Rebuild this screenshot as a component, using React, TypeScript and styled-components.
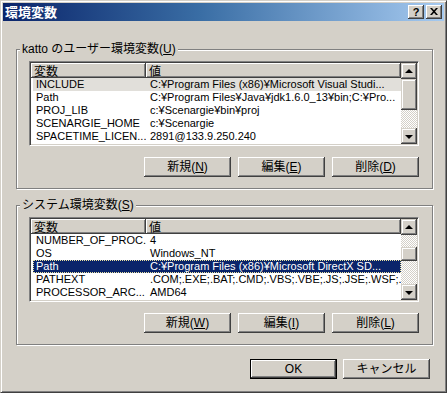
import { FC } from "react";
import styled, { createGlobalStyle } from "styled-components";

const GlobalStyle = createGlobalStyle`
  html, body {
    margin: 0;
    padding: 0;
    background: #d4d0c8;
  }
  * {
    box-sizing: border-box;
  }
`;

const face = "#d4d0c8";
const uiFont = `"Liberation Sans", "Noto Sans CJK JP", sans-serif`;

const Window = styled.div`
  width: 447px;
  height: 393px;
  display: flex;
  flex-direction: column;
  background: ${face};
  border-top: 1px solid ${face};
  border-left: 1px solid ${face};
  border-right: 1px solid #404040;
  border-bottom: 1px solid #404040;
  box-shadow: inset 1px 1px 0 #fff, inset -1px -1px 0 #808080;
  padding: 2px;
  font-family: ${uiFont};
  font-size: 12px;
  color: #000;
`;

const TitleBar = styled.div`
  height: 18px;
  display: flex;
  align-items: center;
  padding: 0 2px 0 2px;
  background: linear-gradient(to right, #0a246a 0%, #3a6ea5 45%, #a6caf0 100%);
`;

const Title = styled.div`
  flex: 1;
  color: #fff;
  font-family: "Noto Sans CJK JP", sans-serif;
  font-weight: bold;
  font-size: 13px;
  line-height: 18px;
`;

const CaptionButton = styled.div<{ $gap?: number }>`
  width: 16px;
  height: 14px;
  margin-left: ${({ $gap }) => $gap ?? 0}px;
  background: ${face};
  box-shadow: inset -1px -1px 0 #404040, inset 1px 1px 0 #fff,
    inset -2px -2px 0 #808080, inset 2px 2px 0 ${face};
  display: flex;
  align-items: center;
  justify-content: center;
  font-family: "Liberation Sans", sans-serif;
  font-weight: bold;
  font-size: 11px;
  line-height: 14px;
  padding-bottom: 1px;
`;

const Body = styled.div`
  flex: 1;
  display: flex;
  flex-direction: column;
  padding: 21px 11px 0 13px;
`;

const Group = styled.fieldset<{ $top?: number }>`
  margin: ${({ $top }) => $top ?? 0}px 0 0 0;
  padding: 0;
  min-width: 0;
  border: 1px solid #808080;
  box-shadow: 1px 1px 0 #fff, inset 1px 1px 0 #fff;
`;

const Legend = styled.legend`
  margin-left: 3px;
  padding: 0 2px;
  height: 14px;
  line-height: 14px;
  font-size: 12px;
  background: ${face};
  white-space: nowrap;
`;

const GroupContent = styled.div`
  display: flex;
  flex-direction: column;
  padding: 5px 13px 11px 12px;
`;

const List = styled.div`
  height: 85px;
  display: flex;
  background: #fff;
  border-top: 1px solid #808080;
  border-left: 1px solid #808080;
  border-right: 1px solid #fff;
  border-bottom: 1px solid #fff;
  box-shadow: inset 1px 1px 0 #404040, inset -1px -1px 0 ${face};
  padding: 1px;
`;

const ListBody = styled.div`
  flex: 1;
  min-width: 0;
  overflow: hidden;
  display: flex;
  flex-direction: column;
`;

const HeaderRow = styled.div`
  display: flex;
  height: 15px;
  flex-shrink: 0;
`;

const HeaderCell = styled.div<{ $width?: number }>`
  ${({ $width }) => ($width ? `width: ${$width}px;` : "flex: 1;")}
  height: 15px;
  background: ${face};
  box-shadow: inset -1px -1px 0 #404040, inset 1px 1px 0 #fff,
    inset -2px -2px 0 #808080;
  font-family: "Noto Sans CJK JP", sans-serif;
  font-size: 12px;
  line-height: 15px;
  padding-left: 3px;
  white-space: nowrap;
`;

const Row = styled.div<{ $state?: "selected" | "inactive" }>`
  display: flex;
  height: 13px;
  flex-shrink: 0;
  margin-left: 2px;
  font-size: 11px;
  line-height: 13px;
  white-space: nowrap;
  background: ${({ $state }) =>
    $state === "selected" ? "#0a246a" : $state === "inactive" ? "#e1dfda" : "transparent"};
  color: ${({ $state }) => ($state === "selected" ? "#fff" : "#000")};
  outline: ${({ $state }) => ($state === "selected" ? "1px dotted #e8e0a0" : "none")};
  outline-offset: -1px;
`;

const Cell = styled.div<{ $width?: number }>`
  ${({ $width }) => ($width ? `width: ${$width}px;` : "flex: 1;")}
  overflow: hidden;
  padding-left: ${({ $width }) => ($width ? 3 : 4)}px;
`;

const ScrollBar = styled.div`
  width: 16px;
  display: flex;
  flex-direction: column;
  flex-shrink: 0;
  background: repeating-conic-gradient(#fff 0 25%, ${face} 0 50%) 0 0 / 2px 2px;
`;

const ScrollPart = styled.div<{ $h: number; $mt?: number }>`
  height: ${({ $h }) => $h}px;
  margin-top: ${({ $mt }) => $mt ?? 0}px;
  flex-shrink: 0;
  background: ${face};
  box-shadow: inset -1px -1px 0 #404040, inset 1px 1px 0 ${face},
    inset -2px -2px 0 #808080, inset 2px 2px 0 #fff;
  display: flex;
  align-items: center;
  justify-content: center;
`;

const ScrollTrack = styled.div`
  flex: 1;
`;

const Arrow = styled.div<{ $down?: boolean }>`
  width: 0;
  height: 0;
  border-left: 4px solid transparent;
  border-right: 4px solid transparent;
  ${({ $down }) =>
    $down ? "border-top: 4px solid #000; margin-top: 1px;" : "border-bottom: 4px solid #000; margin-top: -1px;"}
`;

const ButtonRow = styled.div<{ $gap: number }>`
  display: flex;
  justify-content: flex-end;
  gap: ${({ $gap }) => $gap}px;
  margin-top: 11px;
`;

const Button = styled.div<{ $default?: boolean }>`
  width: 87px;
  height: 20px;
  background: ${face};
  display: flex;
  align-items: center;
  justify-content: center;
  font-size: 12px;
  line-height: 14px;
  white-space: nowrap;
  ${({ $default }) => ($default ? "border: 1px solid #000;" : "")}
  box-shadow: inset -1px -1px 0 #404040, inset 1px 1px 0 #fff,
    inset -2px -2px 0 #808080, inset 2px 2px 0 ${face};
  u {
    text-underline-offset: 1px;
  }
`;

const Footer = styled.div`
  display: flex;
  justify-content: flex-end;
  gap: 6px;
  margin-top: 14px;
  padding-right: 3px;
`;

type EnvVar = { name: string; value: string; state?: "selected" | "inactive" };

const userVars: EnvVar[] = [
  { name: "INCLUDE", value: "C:¥Program Files (x86)¥Microsoft Visual Studi...", state: "inactive" },
  { name: "Path", value: "C:¥Program Files¥Java¥jdk1.6.0_13¥bin;C:¥Pro..." },
  { name: "PROJ_LIB", value: "c:¥Scenargie¥bin¥proj" },
  { name: "SCENARGIE_HOME", value: "c:¥Scenargie" },
  { name: "SPACETIME_LICEN...", value: "2891@133.9.250.240" },
  { name: "TEMP", value: "%USERPROFILE%¥Local Settings¥Temp" },
];

const systemVars: EnvVar[] = [
  { name: "NUMBER_OF_PROC...", value: "4" },
  { name: "OS", value: "Windows_NT" },
  { name: "Path", value: "C:¥Program Files (x86)¥Microsoft DirectX SD...", state: "selected" },
  { name: "PATHEXT", value: ".COM;.EXE;.BAT;.CMD;.VBS;.VBE;.JS;.JSE;.WSF;..." },
  { name: "PROCESSOR_ARC...", value: "AMD64" },
  { name: "PROCESSOR_IDE...", value: "EM64T Family 6 Model 23 Stepping 10, Genuin..." },
];

interface ListProps {
  items: EnvVar[];
  thumbTop: number;
  thumbHeight: number;
}

const EnvList: FC<ListProps> = ({ items, thumbTop, thumbHeight }) => (
  <List>
    <ListBody>
      <HeaderRow>
        <HeaderCell $width={115}>変数</HeaderCell>
        <HeaderCell>値</HeaderCell>
      </HeaderRow>
      {items.map((item) => (
        <Row key={item.name + item.value} $state={item.state}>
          <Cell $width={113}>{item.name}</Cell>
          <Cell>{item.value}</Cell>
        </Row>
      ))}
    </ListBody>
    <ScrollBar>
      <ScrollPart $h={16}>
        <Arrow />
      </ScrollPart>
      <ScrollPart $h={thumbHeight} $mt={thumbTop} />
      <ScrollTrack />
      <ScrollPart $h={16}>
        <Arrow $down />
      </ScrollPart>
    </ScrollBar>
  </List>
);

const App: FC = () => {
  return (
    <>
      <GlobalStyle />
      <Window>
        <TitleBar>
          <Title>環境変数</Title>
          <CaptionButton>?</CaptionButton>
          <CaptionButton $gap={2}>
            <svg width="8" height="7" viewBox="0 0 8 7">
              <path d="M0 0h2l2 2.2L6 0h2L5 3.5 8 7H6L4 4.8 2 7H0l3-3.5z" fill="#000" />
            </svg>
          </CaptionButton>
        </TitleBar>
        <Body>
          <Group>
            <Legend>
              katto のユーザー環境変数(<u>U</u>)
            </Legend>
            <GroupContent>
              <EnvList items={userVars} thumbTop={0} thumbHeight={31} />
              <ButtonRow $gap={7}>
                <Button>
                  新規(<u>N</u>)
                </Button>
                <Button>
                  編集(<u>E</u>)
                </Button>
                <Button>
                  削除(<u>D</u>)
                </Button>
              </ButtonRow>
            </GroupContent>
          </Group>
          <Group $top={9}>
            <Legend>
              システム環境変数(<u>S</u>)
            </Legend>
            <GroupContent>
              <EnvList items={systemVars} thumbTop={12} thumbHeight={14} />
              <ButtonRow $gap={7}>
                <Button>
                  新規(<u>W</u>)
                </Button>
                <Button>
                  編集(<u>I</u>)
                </Button>
                <Button>
                  削除(<u>L</u>)
                </Button>
              </ButtonRow>
            </GroupContent>
          </Group>
          <Footer>
            <Button $default>OK</Button>
            <Button>キャンセル</Button>
          </Footer>
        </Body>
      </Window>
    </>
  );
};

export default App;
